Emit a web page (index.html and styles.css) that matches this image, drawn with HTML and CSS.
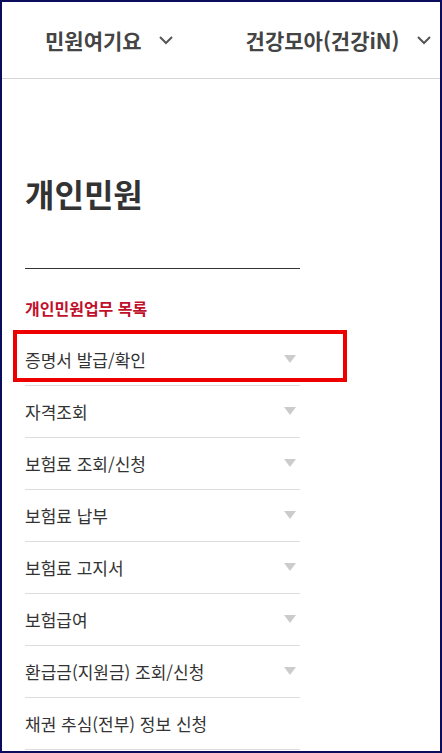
FILE: index.html
```html
<!DOCTYPE html>
<html lang="ko">
<head>
    <meta charset="UTF-8">
    <title>개인민원</title>
    <link rel="stylesheet" href="styles.css">
</head>
<body>
    <div class="frame">
        <header class="top-nav">
            <div class="nav-item nav-first">
                <span>민원여기요</span>
                <svg class="chev" width="16" height="10" viewBox="0 0 16 10"><polyline points="2,2 8,8 14,2" /></svg>
            </div>
            <div class="nav-item nav-second">
                <span>건강모아(건강iN)</span>
                <svg class="chev" width="16" height="10" viewBox="0 0 16 10"><polyline points="2,2 8,8 14,2" /></svg>
            </div>
        </header>

        <section class="content">
            <h1 class="page-title">개인민원</h1>
            <div class="title-line"></div>
            <p class="list-label">개인민원업무 목록</p>
            <ul class="menu-list">
                <li class="menu-item has-sub">증명서 발급/확인</li>
                <li class="menu-item has-sub">자격조회</li>
                <li class="menu-item has-sub">보험료 조회/신청</li>
                <li class="menu-item has-sub">보험료 납부</li>
                <li class="menu-item has-sub">보험료 고지서</li>
                <li class="menu-item has-sub">보험급여</li>
                <li class="menu-item has-sub">환급금(지원금) 조회/신청</li>
                <li class="menu-item">채권 추심(전부) 정보 신청</li>
            </ul>
            <div class="highlight"></div>
        </section>
    </div>
</body>
</html>
```

FILE: styles.css
```css
/* 기본 */
html, body {
    margin: 0;
    padding: 0;
    background-color: #ffffff;
}

body {
    font-family: "Noto Sans CJK KR", "Noto Sans", sans-serif;
    color: #333333;
}

.frame {
    position: relative;
    width: 442px;
    height: 753px;
    box-sizing: border-box;
    border: 2px solid #0c0c5c;
    overflow: hidden;
}

/* 상단 메뉴 */
.top-nav {
    display: flex;
    align-items: center;
    height: 76px;
    border-bottom: 1px solid #d4d4d4;
}

.nav-item {
    display: flex;
    align-items: center;
    font-size: 21px;
    font-weight: 700;
    color: #444444;
}

.nav-first {
    margin-left: 43px;
}

.nav-second {
    margin-left: 72px;
}

.chev {
    fill: none;
    stroke: #555555;
    stroke-width: 2;
    margin-left: 16px;
}

/* 본문 */
.content {
    padding: 0 0 0 23px;
    width: 275px;
}

.page-title {
    margin: 93px 0 0 0;
    font-size: 32px;
    line-height: 42px;
    font-weight: 700;
    color: #333333;
}

.title-line {
    margin-top: 54px;
    height: 1px;
    background-color: #333333;
}

.list-label {
    margin: 28px 0 0 0;
    font-size: 16px;
    line-height: 22px;
    font-weight: 700;
    color: #c0102c;
}

.menu-list {
    list-style: none;
    margin: 15px 0 0 0;
    padding: 0;
}

.menu-item {
    position: relative;
    height: 51px;
    line-height: 51px;
    border-bottom: 1px solid #dddddd;
    font-size: 17px;
    color: #333333;
}

.has-sub::after {
    content: "";
    position: absolute;
    right: 4px;
    top: 21px;
    border-left: 6px solid transparent;
    border-right: 6px solid transparent;
    border-top: 8px solid #cccccc;
}

/* 강조 표시 */
.highlight {
    position: absolute;
    left: 11px;
    top: 328px;
    width: 326px;
    height: 44px;
    border: 4px solid #ee0000;
}
```
